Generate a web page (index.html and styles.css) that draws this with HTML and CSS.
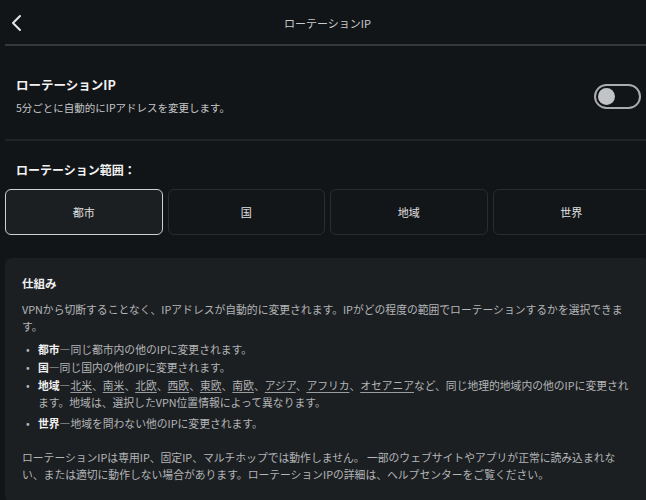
FILE: index.html
```html
<!DOCTYPE html>
<html lang="ja">
<head>
    <meta charset="UTF-8">
    <meta name="viewport" content="width=device-width, initial-scale=1.0">
    <title>ローテーションIP</title>
    <link rel="stylesheet" href="styles.css">
</head>
<body>

<div class="page">
    <div class="topbar">
        <div class="back">
            <svg width="12" height="18" viewBox="0 0 12 18">
                <polyline points="9,2 2,9 9,16" fill="none" stroke="#e6e6e6" stroke-width="2" stroke-linecap="round" stroke-linejoin="round"/>
            </svg>
        </div>
        <div class="title">ローテーションIP</div>
        <div></div>
    </div>

    <div class="setting">
        <div class="setting-text">
            <div class="setting-title">ローテーションIP</div>
            <div class="setting-desc">5分ごとに自動的にIPアドレスを変更します。</div>
        </div>
        <div class="toggle"><span class="knob"></span></div>
    </div>

    <div class="scope-label">ローテーション範囲：</div>
    <div class="scope-options">
        <div class="option selected">都市</div>
        <div class="option">国</div>
        <div class="option">地域</div>
        <div class="option">世界</div>
    </div>

    <div class="info-card">
        <div class="info-title">仕組み</div>
        <p>VPNから切断することなく、IPアドレスが自動的に変更されます。IPがどの程度の範囲でローテーションするかを選択できます。</p>
        <ul>
            <li><b>都市</b>—同じ都市内の他のIPに変更されます。</li>
            <li><b>国</b>—同じ国内の他のIPに変更されます。</li>
            <li><b>地域</b>—<u>北米</u>、<u>南米</u>、<u>北欧</u>、<u>西欧</u>、<u>東欧</u>、<u>南欧</u>、<u>アジア</u>、<u>アフリカ</u>、<u>オセアニア</u>など、同じ地理的地域内の他のIPに変更されます。地域は、選択したVPN位置情報によって異なります。</li>
            <li class="spaced"><b>世界</b>—地域を問わない他のIPに変更されます。</li>
        </ul>
        <p class="note">ローテーションIPは専用IP、固定IP、マルチホップでは動作しません。 一部のウェブサイトやアプリが正常に読み込まれない、または適切に動作しない場合があります。ローテーションIPの詳細は、ヘルプセンターをご覧ください。</p>
    </div>
</div>

</body>
</html>
```

FILE: styles.css
```css
* {
    margin: 0;
    padding: 0;
    box-sizing: border-box;
}

body {
    background: #121518;
    color: #e8e8e8;
    font-family: "Noto Sans CJK JP", "Noto Sans", sans-serif;
    overflow: hidden;
}

.page {
    width: 650px;
    padding-left: 5px;
}

/* top navigation */
.topbar {
    display: grid;
    grid-template-columns: 40px 1fr 40px;
    align-items: center;
    height: 46px;
    border-bottom: 2px solid #35383b;
}

.back {
    display: flex;
    padding-left: 6px;
    padding-top: 1px;
}

.title {
    text-align: center;
    font-size: 11px;
    color: #c9cacc;
    padding-top: 1px;
}

/* toggle row */
.setting {
    display: flex;
    justify-content: space-between;
    align-items: center;
    padding: 30px 9px 23px 11px;
    border-bottom: 2px solid #212427;
}

.setting-title {
    font-size: 12.5px;
    font-weight: bold;
    line-height: 18px;
    color: #f2f2f2;
}

.setting-desc {
    font-size: 10.5px;
    line-height: 16px;
    color: #c4c6c8;
    margin-top: 6px;
}

.toggle {
    width: 47px;
    height: 25px;
    border: 2px solid #a9abad;
    border-radius: 13px;
    display: flex;
    align-items: center;
    padding-left: 2px;
}

.knob {
    width: 17px;
    height: 17px;
    border-radius: 50%;
    background: #c2c3c5;
}

/* scope picker */
.scope-label {
    font-size: 12px;
    font-weight: bold;
    line-height: 18px;
    color: #f2f2f2;
    margin: 20px 0 10px 11px;
}

.scope-options {
    display: grid;
    grid-template-columns: repeat(4, 1fr);
    gap: 5px;
}

.option {
    height: 46px;
    display: flex;
    justify-content: center;
    align-items: center;
    font-size: 11px;
    color: #e0e0e0;
    border: 1px solid #2a2d30;
    border-radius: 6px;
    background: #131619;
}

.option.selected {
    border: 1.5px solid #cfd1d3;
    background: #1c1f22;
}

/* explanation card */
.info-card {
    margin-top: 23px;
    background: #1c1f22;
    border-radius: 7px;
    padding: 16px 17px 19px 17px;
    font-size: 10.8px;
    line-height: 17px;
    color: #b3b5b7;
    text-spacing-trim: space-all;
}

.info-title {
    font-size: 11.5px;
    font-weight: bold;
    line-height: 18px;
    color: #f0f0f0;
    margin-bottom: 9px;
}

.info-card ul {
    list-style: none;
    padding-left: 16px;
    margin-top: 6px;
}

.info-card li {
    position: relative;
    margin-bottom: 1px;
}

.info-card li::before {
    content: "•";
    position: absolute;
    left: -12px;
    color: #b3b5b7;
}

.info-card li.spaced {
    margin-top: 4px;
}

.info-card b {
    color: #f0f0f0;
}

.info-card u {
    text-decoration-color: #9a9c9e;
    text-underline-offset: 2px;
}

.note {
    margin-top: 17px;
}
```
